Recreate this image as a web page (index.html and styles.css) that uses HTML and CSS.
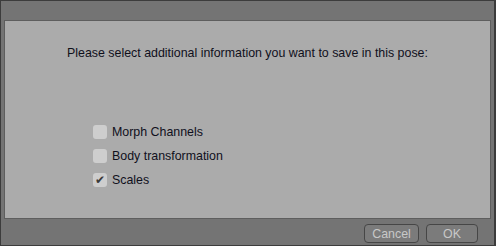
FILE: index.html
```html
<!DOCTYPE html>
<html lang="en">
<head>
  <meta charset="UTF-8">
  <title>Save Pose</title>
  <link rel="stylesheet" href="styles.css">
</head>
<body>
  <div class="dialog">
    <div class="panel">
      <p class="prompt">Please select additional information you want to save in this pose:</p>

      <!-- Options -->
      <div class="options">
        <label class="option"><span class="box"></span>Morph Channels</label>
        <label class="option"><span class="box"></span>Body transformation</label>
        <label class="option"><span class="box checked">&#10004;</span>Scales</label>
      </div>
    </div>

    <div class="footer">
      <button class="button cancel">Cancel</button>
      <button class="button ok">OK</button>
    </div>
  </div>
</body>
</html>
```

FILE: styles.css
```css
body {
  margin: 0;
  font-family: "Liberation Sans", Arial, sans-serif;
  background-color: #3c3c3c;
}
.dialog {
  width: 493px;
  height: 244px;
  margin-left: 1px;
  margin-top: 1px;
  background-color: #747474;
  padding: 19px 3px 0 3px;
  box-sizing: border-box;
  display: flex;
  flex-direction: column;
}
.panel {
  height: 199px;
  box-sizing: border-box;
  background-color: #ababab;
  border: 1px solid #5e5e5e;
  padding-top: 25px;
}
.prompt {
  margin: 0 0 0 62px;
  font-size: 12.4px;
  color: #10101c;
}
.options {
  margin: 65px 0 0 88px;
  display: flex;
  flex-direction: column;
  gap: 10px;
}
.option {
  display: flex;
  align-items: center;
  font-size: 12.4px;
  color: #10101c;
}
.box {
  width: 14px;
  height: 14px;
  margin-right: 5px;
  border-radius: 3px;
  background-color: #cecece;
  color: #3a3a3a;
  font-size: 12px;
  line-height: 14px;
  text-align: center;
}
.footer {
  display: flex;
  justify-content: flex-end;
  gap: 7px;
  padding: 5px 13px 0 0;
}
.button {
  height: 19px;
  padding: 0;
  border: 1px solid #464646;
  border-radius: 4px;
  background-color: #7b7b7b;
  color: #c8c8c8;
  font-family: "Liberation Sans", Arial, sans-serif;
  font-size: 12.4px;
}
.cancel {
  width: 55px;
}
.ok {
  width: 52px;
}
```
